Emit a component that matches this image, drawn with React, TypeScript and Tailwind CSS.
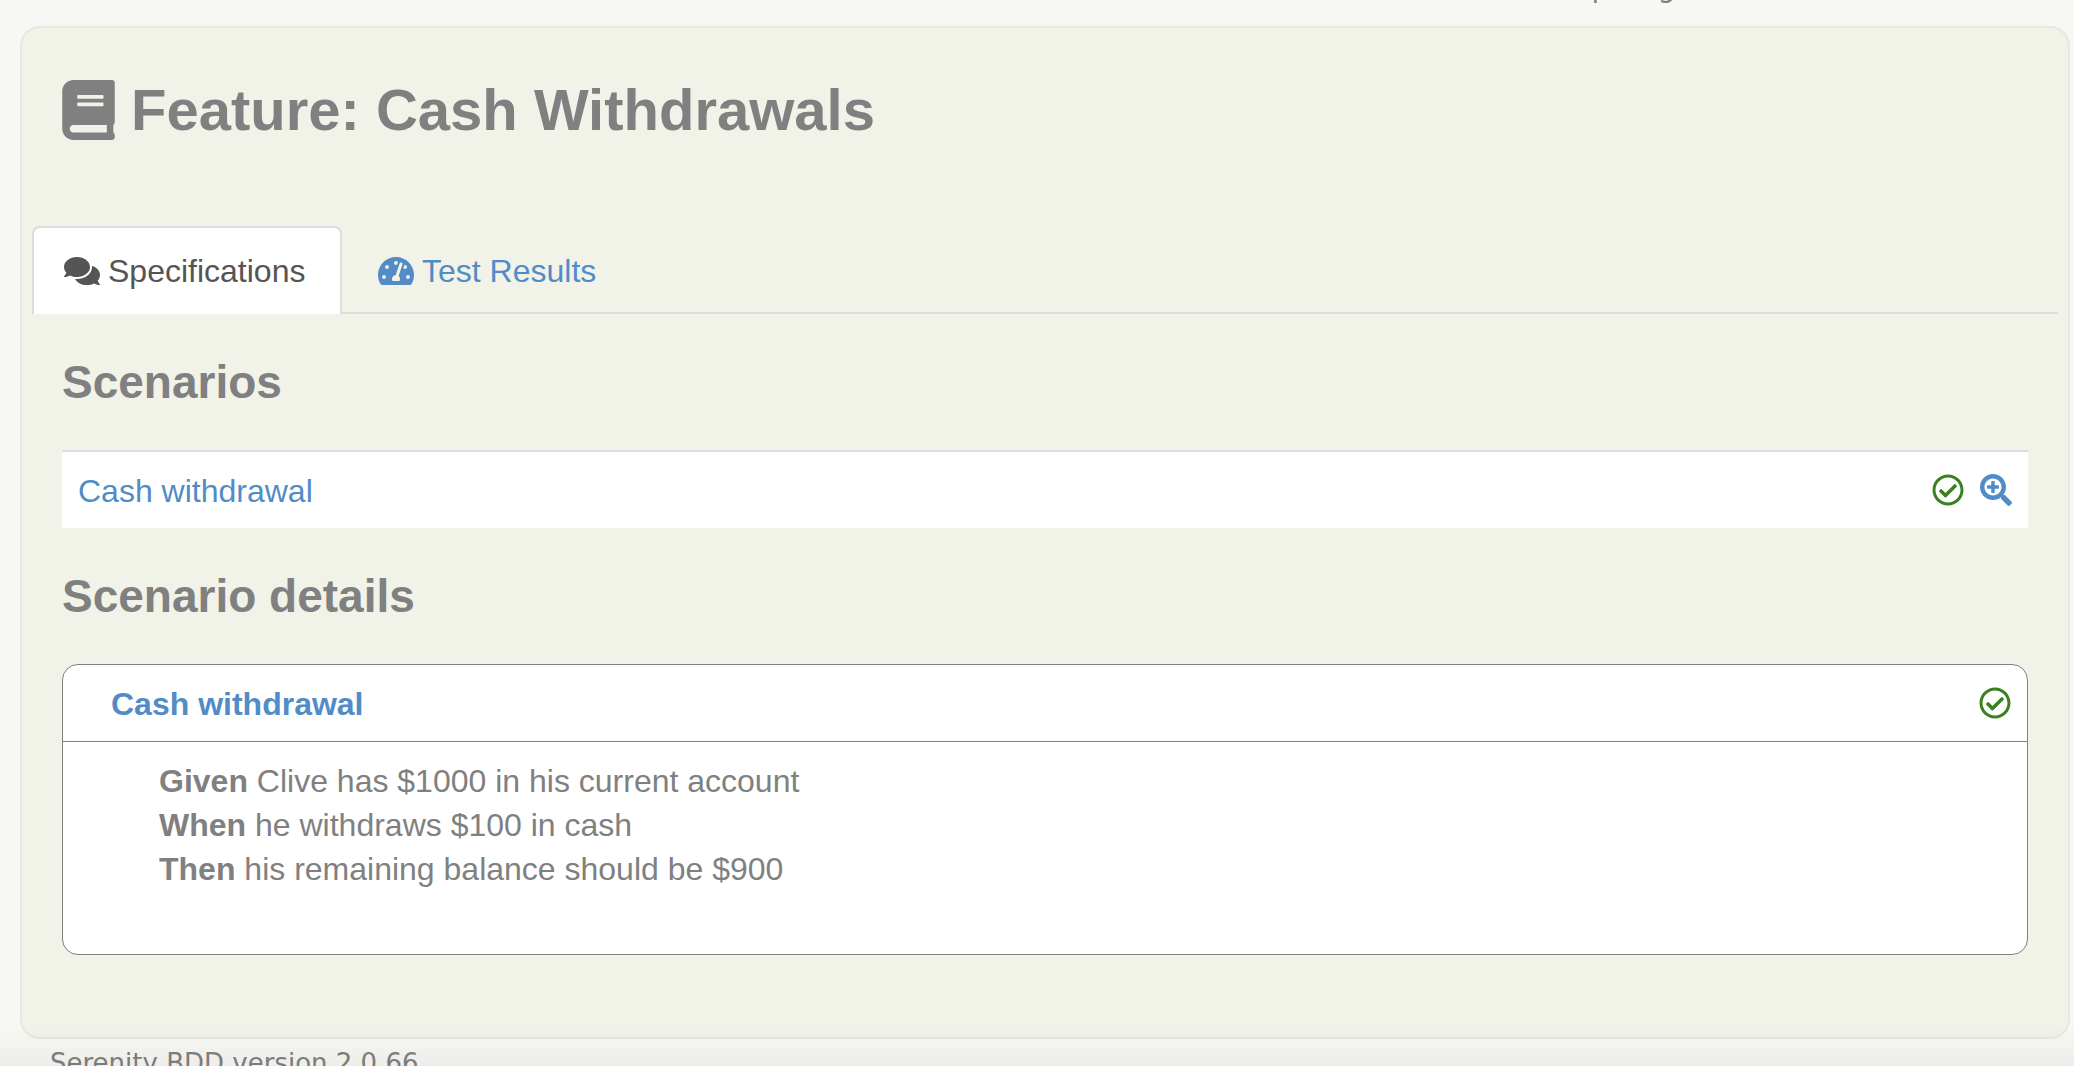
import { FaBook, FaComments, FaTachometerAlt, FaRegCheckCircle, FaSearchPlus } from "react-icons/fa";

const steps = [
  { keyword: "Given", text: "Clive has $1000 in his current account" },
  { keyword: "When", text: "he withdraws $100 in cash" },
  { keyword: "Then", text: "his remaining balance should be $900" },
];

function SectionTitle({ children }: { children: string }) {
  return <h2 className="pt-10 text-[46px] leading-[56px] font-bold">{children}</h2>;
}

export default function App() {
  return (
    <div className="relative h-screen overflow-hidden bg-[#f7f8f3] pr-1 pl-5 font-['Liberation_Sans',Arial,sans-serif] text-[32px] leading-[44px] text-[#808080]">
      <header className="-mt-7 flex h-[54px] justify-end pr-20 font-['DejaVu_Sans',Verdana,sans-serif] text-[28px] leading-8">
        <p className="w-[434px]">Report generated</p>
      </header>

      <main className="rounded-[20px] border-2 border-[#e6e8e2] bg-[#f1f2e8] px-2.5 pt-[47px] pb-[82px]">
        <h1 className="flex items-center gap-4 px-[30px] text-[58px] leading-[70px] font-bold">
          <FaBook className="h-[60px] w-[53px] shrink-0" aria-hidden="true" />
          Feature: Cash Withdrawals
        </h1>

        <div role="tablist" className="mt-[81px] flex border-b-2 border-[#ddd]">
          <button
            role="tab"
            aria-selected="true"
            className="-mb-0.5 flex h-[88px] min-w-[310px] items-center gap-2 rounded-t-lg border-2 border-b-0 border-[#ddd] bg-white px-[30px] text-[#555]"
          >
            <FaComments className="w-9" aria-hidden="true" />
            Specifications
          </button>
          <button role="tab" aria-selected="false" className="-mb-0.5 ml-1 flex h-[88px] items-center gap-2 self-start border-t-2 border-transparent px-8 text-[#518cc7]">
            <FaTachometerAlt className="w-9" aria-hidden="true" />
            Test Results
          </button>
        </div>

        <section className="px-[30px]">
          <SectionTitle>Scenarios</SectionTitle>
          <div className="mt-10 flex h-[78px] items-center justify-between border-t-2 border-[#ddd] bg-white px-4 text-[#518cc7]">
            <a href="#scenario" className="pt-0.5">
              Cash withdrawal
            </a>
            <div className="flex items-center gap-4">
              <FaRegCheckCircle className="text-[#39801f]" aria-label="Passed" />
              <a href="#details" aria-label="Show details">
                <FaSearchPlus />
              </a>
            </div>
          </div>

          <SectionTitle>Scenario details</SectionTitle>
          <article className="mt-10 rounded-2xl border border-[#808080] bg-white pb-[63px]">
            <div className="flex h-[77px] items-center justify-between border-b border-[#808080] pr-4 pl-12">
              <a href="#scenario" className="pt-0.5 font-bold text-[#518cc7]">
                Cash withdrawal
              </a>
              <FaRegCheckCircle className="text-[#39801f]" aria-label="Passed" />
            </div>
            <div className="pt-[17px] pl-24">
              {steps.map((step) => (
                <p key={step.keyword}>
                  <strong>{step.keyword}</strong> {step.text}
                </p>
              ))}
            </div>
          </article>
        </section>
      </main>

      <footer className="px-[30px] pt-2 font-['DejaVu_Sans',Verdana,sans-serif] text-[26px] leading-8">
        Serenity BDD version 2.0.66
      </footer>
      <div className="pointer-events-none absolute inset-x-0 bottom-0 h-10 bg-linear-to-b from-transparent to-black/4" />
    </div>
  );
}
